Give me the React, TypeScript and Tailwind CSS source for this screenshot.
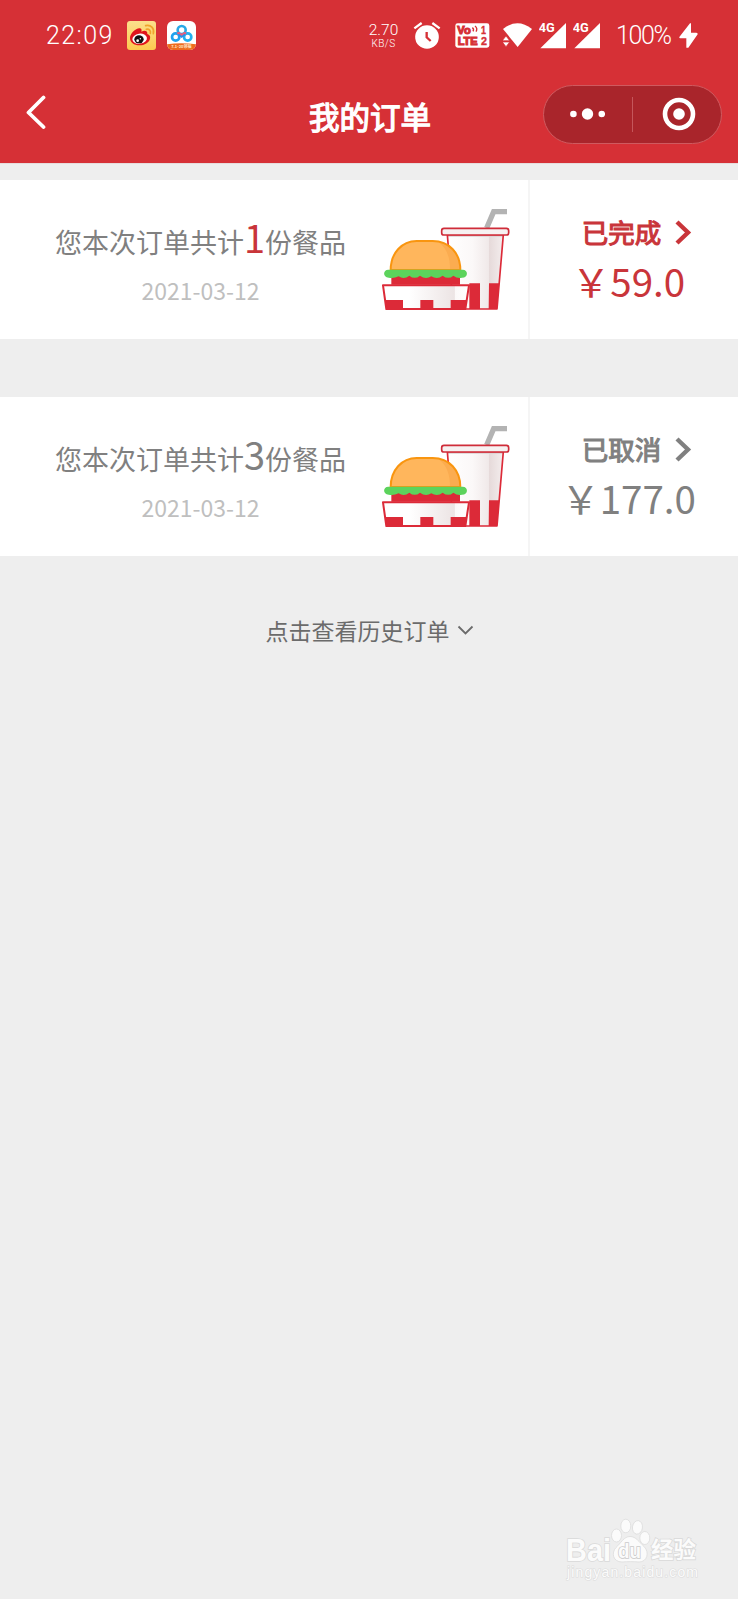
interface Order {
  id: number;
  count: number;
  date: string;
  status: string;
  price: string;
  done: boolean;
}

const orders: Order[] = [
  { id: 1, count: 1, date: '2021-03-12', status: '已完成', price: '59.0', done: true },
  { id: 2, count: 3, date: '2021-03-12', status: '已取消', price: '177.0', done: false },
];

function WeiboIcon() {
  return (
    <svg className="ml-[14px] h-[29px] w-[29px]" viewBox="0 0 87 87">
      <defs>
        <linearGradient id="weibo-bg" x1="0" y1="0" x2="0" y2="1">
          <stop offset="0" stopColor="#fbe08c" />
          <stop offset="1" stopColor="#fdc94f" />
        </linearGradient>
      </defs>
      <rect width="87" height="87" rx="9" fill="url(#weibo-bg)" />
      <path
        d="M9 51C9 38 27 20 39 22C45 23 44 29 43 32C52 27 62 28 61 39C68 42 71 46 69 53C66 65 53 73 37 73C21 73 9 64 9 51Z"
        fill="#e0151c"
      />
      <ellipse cx="38" cy="53" rx="22" ry="15" fill="#fff" transform="rotate(-8 38 53)" />
      <ellipse cx="36" cy="55" rx="14" ry="12" fill="#111" />
      <circle cx="32" cy="59" r="4" fill="#fff" />
      <circle cx="40" cy="53" r="2.2" fill="#fff" />
      <path d="M58 25C66 23 72 29 70 37M56 14C71 10 83 22 79 38" fill="none" stroke="#f0a32c" strokeWidth="5" strokeLinecap="round" />
    </svg>
  );
}

function NetdiskIcon() {
  return (
    <svg className="ml-[11px] h-[29px] w-[29px]" viewBox="0 0 87 87">
      <defs>
        <clipPath id="netdisk-clip">
          <rect width="87" height="87" rx="18" />
        </clipPath>
      </defs>
      <g clipPath="url(#netdisk-clip)">
        <rect width="87" height="87" fill="#fff" />
        <path d="M0 70Q43 64 87 70V87H0Z" fill="#ee6b1f" />
        <g fill="none" strokeWidth="8">
          <circle cx="26" cy="48" r="11" stroke="#1fa3ee" />
          <circle cx="62" cy="48" r="11" stroke="#22b0f0" />
          <circle cx="44" cy="27" r="12" stroke="#2aa9e6" />
          <path d="M33 34A12 12 0 0 0 55 34" stroke="#ee5d78" />
          <path d="M34 40L44 48L54 40" stroke="#2a8fe6" strokeWidth="5" />
        </g>
        <text x="43" y="82" textAnchor="middle" fontSize="12" fontWeight="700" fill="#ffe9c9" fontFamily="Noto Sans CJK SC, sans-serif">
          7.1-20领福
        </text>
      </g>
    </svg>
  );
}

function AlarmIcon() {
  return (
    <svg className="ml-[14px] h-[27px] w-[28px]" viewBox="0 0 84 81">
      <circle cx="42" cy="45" r="35.5" fill="#fff" />
      <path d="M4 19L26 3M58 3L80 19" stroke="#fff" strokeWidth="7" />
      <path d="M41 30V46L53 57" fill="none" stroke="#d63036" strokeWidth="7" />
    </svg>
  );
}

function VolteIcon() {
  return (
    <svg className="ml-[14px] h-[25px] w-[35px]" viewBox="0 0 105 75">
      <rect x="1" y="1" width="102" height="73" rx="7" fill="#fff" />
      <g fill="#d63036" stroke="#d63036" fontFamily="Liberation Sans, sans-serif" fontWeight="700">
        <text x="7" y="32" fontSize="30" strokeWidth="3" textLength="40" lengthAdjust="spacingAndGlyphs">
          Vo
        </text>
        <text x="8" y="67" fontSize="30" strokeWidth="3" textLength="60" lengthAdjust="spacingAndGlyphs">
          LTE
        </text>
        <text x="78" y="32" fontSize="30" strokeWidth="1" textLength="15" lengthAdjust="spacingAndGlyphs">
          1
        </text>
        <text x="78" y="67" fontSize="30" strokeWidth="1" textLength="18" lengthAdjust="spacingAndGlyphs">
          2
        </text>
      </g>
      <path d="M52 14Q58 18 54 25M60 9Q69 16 63 26" fill="none" stroke="#d63036" strokeWidth="4" />
    </svg>
  );
}

function WifiIcon() {
  return (
    <svg className="ml-[13px] h-[25px] w-[29px]" viewBox="0 0 87 75">
      <path d="M0 18Q43 -16 87 18L44 72Z" fill="#fff" />
      <path d="M-2 53L9 39L20 53ZM-2 57H20L9 71Z" fill="#fff" stroke="#d63036" strokeWidth="2" />
    </svg>
  );
}

function SignalIcon() {
  return (
    <svg className="h-[27px] w-[28px]" viewBox="0 0 84 81">
      <path d="M4 79L81 3V79Z" fill="#fff" />
      <text
        x="-1"
        y="30"
        fontSize="36"
        fontWeight="700"
        fill="#fff"
        stroke="#d63036"
        strokeWidth="7"
        paintOrder="stroke"
        textLength="48"
        lengthAdjust="spacingAndGlyphs"
        fontFamily="Roboto, sans-serif"
      >
        4G
      </text>
    </svg>
  );
}

function StatusBar() {
  return (
    <div className="flex h-[70px] items-center pl-[46px] font-['Roboto',sans-serif] font-light text-white">
      <span className="w-[67px] text-[25px] leading-none tracking-[1.4px] whitespace-nowrap">22:09</span>
      <WeiboIcon />
      <NetdiskIcon />
      <div className="ml-[172px] flex w-[31px] flex-col items-center whitespace-nowrap">
        <span className="text-[15.5px] leading-[16px]">2.70</span>
        <span className="text-[10px] leading-[11px] tracking-[0.4px]">KB/S</span>
      </div>
      <AlarmIcon />
      <VolteIcon />
      <WifiIcon />
      <div className="ml-[7px] flex gap-[6px]">
        <SignalIcon />
        <SignalIcon />
      </div>
      <span className="ml-[15px] w-[56px] text-[25px] leading-none tracking-[-1.4px] whitespace-nowrap">100%</span>
      <svg className="ml-[7px] h-[25px] w-[19px]" viewBox="0 0 57 75">
        <path d="M33 1L1 42Q0 46 4 46H22V74H28L56 34Q57 29 52 29H36V1Z" fill="#fff" />
      </svg>
    </div>
  );
}

function NavBar() {
  return (
    <div className="flex h-[93px] items-start justify-between pr-[16px] pl-[25px]">
      <svg className="mt-[25px] h-[34px] w-[172px]" viewBox="0 0 172 34">
        <path d="M18.5 2.5L3.5 17.5L18.5 32" fill="none" stroke="#fff" strokeWidth="3.8" strokeLinecap="round" strokeLinejoin="round" />
      </svg>
      <h1 className="mt-[23px] text-[30.5px] leading-[46px] font-normal text-white [-webkit-text-stroke:1.3px_#fff]">我的订单</h1>
      <div className="mt-[15px] flex h-[59px] w-[179px] items-center rounded-full border border-[#cf5a5f] bg-[#a9252b] pb-px">
        <svg className="ml-[26px] h-[12px] w-[35px]" viewBox="0 0 35 12" fill="#fff">
          <circle cx="3.4" cy="6" r="3.3" />
          <circle cx="17.5" cy="6" r="5.7" />
          <circle cx="31.8" cy="6" r="3.3" />
        </svg>
        <span className="ml-[27px] h-[35px] w-px bg-[#c5565b]" />
        <svg className="ml-[29px] h-[34px] w-[34px]" viewBox="0 0 34 34">
          <circle cx="17" cy="17" r="14" fill="none" stroke="#fff" strokeWidth="4.6" />
          <circle cx="17" cy="17" r="5.8" fill="#fff" />
        </svg>
      </div>
    </div>
  );
}

function MealIcon() {
  return (
    <svg className="mt-[28px] h-[103px] w-[128px]" viewBox="36 54 384 309">
      <defs>
        <linearGradient id="cup" x1="0" x2="1">
          <stop offset="0" stopColor="#fff" />
          <stop offset="0.45" stopColor="#fbf8f8" />
          <stop offset="0.74" stopColor="#f0e9e9" />
          <stop offset="0.75" stopColor="#e6dada" />
          <stop offset="1" stopColor="#f4eeee" />
        </linearGradient>
        <linearGradient id="box" x1="0" x2="1">
          <stop offset="0.3" stopColor="#fff" />
          <stop offset="0.83" stopColor="#ece4e4" />
          <stop offset="0.84" stopColor="#fbf8f8" />
          <stop offset="1" stopColor="#fff" />
        </linearGradient>
      </defs>
      {/* straw */}
      <path d="M350 114L371 65H411" fill="none" stroke="#b3b3b3" strokeWidth="16" />
      {/* cup */}
      <path d="M232 134H400L381 357H250Z" fill="url(#cup)" />
      <path d="M232 132H400V140H233Z" fill="#d9d2d3" />
      <path d="M298 280H330V357H298ZM357 280H388L381 357H356Z" fill="#dc2a38" />
      <path d="M232 134H400L381 357H250Z" fill="none" stroke="#dc2a38" strokeWidth="5" strokeLinejoin="round" />
      <rect x="215" y="115" width="201" height="20" rx="7" fill="#f6f1f1" stroke="#cf2c39" strokeWidth="5" />
      {/* burger */}
      <path d="M64 255H270V284H64Z" fill="#dc2a38" />
      <path d="M62 240C62 190 95 153 140 153H188C238 153 271 190 271 240Z" fill="#ffb65c" />
      <path d="M205 156C232 175 240 205 240 238H269C269 190 240 160 205 156Z" fill="#fbac50" />
      <path d="M62 240C62 190 95 153 140 153H188C238 153 271 190 271 240Z" fill="none" stroke="#f9950f" strokeWidth="6" />
      <path
        d="M55 239H278C295 239 296 263 276 263Q262 266 250 257Q235 270 218 257Q202 270 184 259Q167 270 150 257Q134 270 118 257Q102 270 86 259Q70 267 56 263C38 262 38 239 55 239Z"
        fill="#5cd35c"
      />
      {/* box */}
      <path d="M39 286H297L286 357H49Z" fill="url(#box)" />
      <path d="M45 330H99V357H49ZM151 330H190V357H151ZM242 330H290L286 357H242Z" fill="#dc2a38" />
      <path d="M39 286H297L286 357H49Z" fill="none" stroke="#dc2a38" strokeWidth="6" strokeLinejoin="round" />
    </svg>
  );
}

function OrderCard({ order }: { order: Order }) {
  return (
    <div className="flex h-[159px] bg-white text-[#808080]">
      <div className="flex w-[528px]">
        <div className="flex w-[382px] flex-col items-center pl-[19px] whitespace-nowrap">
          <p className="mt-[30px] text-[27px] leading-[54px]">
            您本次订单共计
            <span className={order.done ? 'text-[38px] text-[#c9353a]' : 'text-[38px]'}>{order.count}</span>
            份餐品
          </p>
          <p className="mt-[4px] text-[23px] leading-[34px] text-[#bfbfbf]">{order.date}</p>
        </div>
        <MealIcon />
      </div>
      <div className="w-[2px] bg-[#f5f5f5]" />
      <div className={order.done ? 'flex flex-1 flex-col items-center text-[#c9353a]' : 'flex flex-1 flex-col items-center'}>
        <div className="mt-[32px] ml-[6px] flex h-[40px] items-center">
          <span className="text-[26.5px] leading-[40px] font-normal [-webkit-text-stroke:1.1px_currentColor]">{order.status}</span>
          <svg className="ml-[14px] h-[25px] w-[17px]" viewBox="0 0 17 25">
            <path d="M2 2L13 12.5L2 23" fill="none" stroke="currentColor" strokeWidth="4.4" />
          </svg>
        </div>
        <p className="pr-[11px] text-[38.5px] leading-[56px] font-normal whitespace-nowrap">￥{order.price}</p>
      </div>
    </div>
  );
}

function Watermark() {
  return (
    <svg className="absolute right-[38px] bottom-[14px] h-[70px] w-[140px]" viewBox="0 0 140 70">
      <g fill="#fbfbfb" stroke="#dcdcdc" strokeWidth="0.8">
        <ellipse cx="56.5" cy="20.5" rx="5" ry="6.5" />
        <ellipse cx="65.8" cy="11" rx="5" ry="6.8" />
        <ellipse cx="77.5" cy="12.3" rx="5" ry="6.8" transform="rotate(8 77 12)" />
        <ellipse cx="84.8" cy="23" rx="5" ry="6.5" />
        <path d="M70 21.5C76 21.5 79 27 84 31.5C90 37.5 87 47 79 47C73 46.5 68 46.5 62 47C53 47 51 38 56 32.5C61 28 64 21.5 70 21.5Z" />
      </g>
      <g fontFamily="Liberation Sans, sans-serif" fontWeight="700" fill="#fbfbfb" stroke="#d9d9d9" strokeWidth="1.6" paintOrder="stroke">
        <text x="6" y="45.5" fontSize="31" textLength="45" lengthAdjust="spacingAndGlyphs">
          Bai
        </text>
        <text x="58" y="43" fontSize="20" textLength="23" lengthAdjust="spacingAndGlyphs" stroke="#cacaca">
          du
        </text>
        <text x="91" y="43" fontSize="23" textLength="45" lengthAdjust="spacingAndGlyphs" fontFamily="Noto Sans CJK SC, sans-serif">
          经验
        </text>
      </g>
      <text
        x="7"
        y="62"
        fontSize="14"
        textLength="131"
        fontFamily="Liberation Sans, sans-serif"
        fill="#fbfbfb"
        stroke="#dcdcdc"
        strokeWidth="1.2"
        paintOrder="stroke"
      >
        jingyan.baidu.com
      </text>
    </svg>
  );
}

export default function App() {
  return (
    <div className="relative h-[1599px] w-[738px] overflow-hidden bg-[#eeeeee] font-['Noto_Sans_CJK_SC',sans-serif]">
      <header className="h-[163px] bg-[#d63036]">
        <StatusBar />
        <NavBar />
      </header>

      <main className="flex flex-col border-t border-[#e6dcdc] pt-[16px]">
        <div className="flex flex-col gap-[58px]">
          {orders.map((order) => (
            <OrderCard key={order.id} order={order} />
          ))}
        </div>

        <button type="button" className="mt-[57px] flex items-center justify-center gap-[7px] pl-px text-[23px] leading-[34px] text-[#6b6b6b]">
          点击查看历史订单
          <svg className="h-[11px] w-[17px]" viewBox="0 0 17 11">
            <path d="M1.5 1.5L8.5 8.5L15.5 1.5" fill="none" stroke="currentColor" strokeWidth="1.8" />
          </svg>
        </button>
      </main>

      <Watermark />
    </div>
  );
}
